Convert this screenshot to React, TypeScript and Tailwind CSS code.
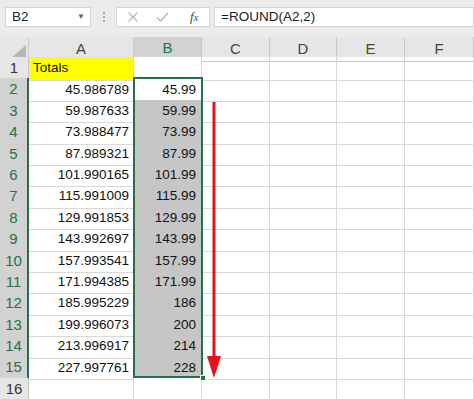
import { FC } from "react";

const colA = [
  "45.986789",
  "59.987633",
  "73.988477",
  "87.989321",
  "101.990165",
  "115.991009",
  "129.991853",
  "143.992697",
  "157.993541",
  "171.994385",
  "185.995229",
  "199.996073",
  "213.996917",
  "227.997761",
];

const colB = ["45.99", "59.99", "73.99", "87.99", "101.99", "115.99", "129.99", "143.99", "157.99", "171.99", "186", "200", "214", "228"];

const grid = "grid grid-cols-[29px_105px_68px_68px_67px_68px_69px]";

const FormulaBar: FC = () => {
  return (
    <div className="flex h-[37px] items-start bg-[#ebebeb] pt-[7px] text-[13.5px] text-[#222]">
      <div className="ml-[5px] flex h-[20px] w-[86px] items-center justify-between border border-[#d6d6d6] bg-white pl-[6px] pr-[5px]">
        <span>B2</span>
        <span className="text-[8px] text-[#666]">▼</span>
      </div>
      <div className="ml-[12px] mt-[5px] flex h-[10px] flex-col justify-between">
        <span className="h-[2px] w-[2px] bg-[#aaa]" />
        <span className="h-[2px] w-[2px] bg-[#aaa]" />
        <span className="h-[2px] w-[2px] bg-[#aaa]" />
      </div>
      <div className="ml-[11px] flex h-[20px] w-[94px] items-center border border-[#d6d6d6] bg-white">
        <svg width="12" height="12" viewBox="0 0 12 12" className="ml-[10px]">
          <path d="M1.5 1.5 L10.5 10.5 M10.5 1.5 L1.5 10.5" stroke="#b9b9b9" strokeWidth="1.3" fill="none" />
        </svg>
        <svg width="13" height="12" viewBox="0 0 13 12" className="ml-[17px]">
          <path d="M1 6.5 L4.5 10 L12 2" stroke="#b9b9b9" strokeWidth="1.5" fill="none" />
        </svg>
        <span className="ml-[21px] font-['Liberation_Serif',serif] text-[13px] italic text-[#444]">
          f<span className="text-[10px]">x</span>
        </span>
      </div>
      <div className="ml-[4px] flex h-[20px] flex-1 items-center border border-[#d6d6d6] bg-white pl-[6px]">
        =ROUND(A2,2)
      </div>
    </div>
  );
};

const HeaderRow: FC = () => {
  const letters = ["A", "B", "C", "D", "E", "F"];
  return (
    <div className={`${grid} h-[20px] bg-[#e6e6e6] text-[15px] text-[#444]`}>
      <div className="relative border-b border-r border-[#c8c8c8]">
        <svg width="16" height="14" viewBox="0 0 16 14" className="absolute bottom-[2px] right-[2px]">
          <path d="M16 0 L16 14 L0 14 Z" fill="#b6b6b6" />
        </svg>
      </div>
      {letters.map((l) =>
        l === "B" ? (
          <div key={l} className="flex items-center justify-center border-b-2 border-r border-b-[#217346] border-r-[#c8c8c8] bg-[#d2d2d2] text-[#217346]">
            {l}
          </div>
        ) : (
          <div key={l} className="flex items-center justify-center border-b border-r border-[#c8c8c8]">
            {l}
          </div>
        )
      )}
    </div>
  );
};

const Row: FC<{ n: number; a?: string; b?: string; first?: boolean }> = ({ n, a, b, first }) => {
  const sel = n >= 2 && n <= 15;
  return (
    <div className={`${grid} h-[21.4px] text-[13.5px] text-[#111]`}>
      <div
        className={
          sel
            ? "flex items-center justify-center border-b border-r-2 border-b-[#c8c8c8] border-r-[#217346] bg-[#d2d2d2] text-[15px] text-[#217346]"
            : "flex items-center justify-center border-b border-r border-[#c8c8c8] bg-[#e6e6e6] text-[15px] text-[#333]"
        }
      >
        {n}
      </div>
      {first ? (
        <div className="flex items-center border-b border-r border-[#d9d9d9] bg-[#ffff00] pl-[4px]">Totals</div>
      ) : (
        <div className="flex items-center justify-end border-b border-r border-[#d9d9d9] pr-[4px]">{a}</div>
      )}
      <div
        className={`flex items-center justify-end border-b border-r pr-[5px] ${
          sel && n > 2 ? "border-[#b5b5b5] bg-[#c6c6c6]" : "border-[#d9d9d9] bg-white"
        }`}
      >
        {b}
      </div>
      <div className="border-b border-r border-[#d9d9d9]" />
      <div className="border-b border-r border-[#d9d9d9]" />
      <div className="border-b border-r border-[#d9d9d9]" />
      <div className="border-b border-r border-[#d9d9d9]" />
    </div>
  );
};

const App: FC = () => {
  return (
    <div className="h-[399px] w-[474px] overflow-hidden bg-white font-['Liberation_Sans',Arial,sans-serif]">
      <FormulaBar />
      <HeaderRow />
      <div className="relative">
        <Row n={1} first />
        {colA.map((a, i) => (
          <Row key={i} n={i + 2} a={a} b={colB[i]} />
        ))}
        <Row n={16} />
        {/* selection outline B2:B15 */}
        <div className="pointer-events-none absolute left-[133px] top-[20.4px] h-[300.6px] w-[70px] border-2 border-[#217346]" />
        <div className="absolute left-[200px] top-[318px] h-[6px] w-[6px] border border-white bg-[#217346]" />
        {/* red arrow */}
        <svg width="18" height="280" viewBox="0 0 18 280" className="pointer-events-none absolute left-[205px] top-[45px]">
          <rect x="7.5" y="0" width="3" height="256" fill="#e3121b" />
          <path d="M2 254 L16 254 L9 276 Z" fill="#e3121b" />
        </svg>
      </div>
    </div>
  );
};

export default App;
